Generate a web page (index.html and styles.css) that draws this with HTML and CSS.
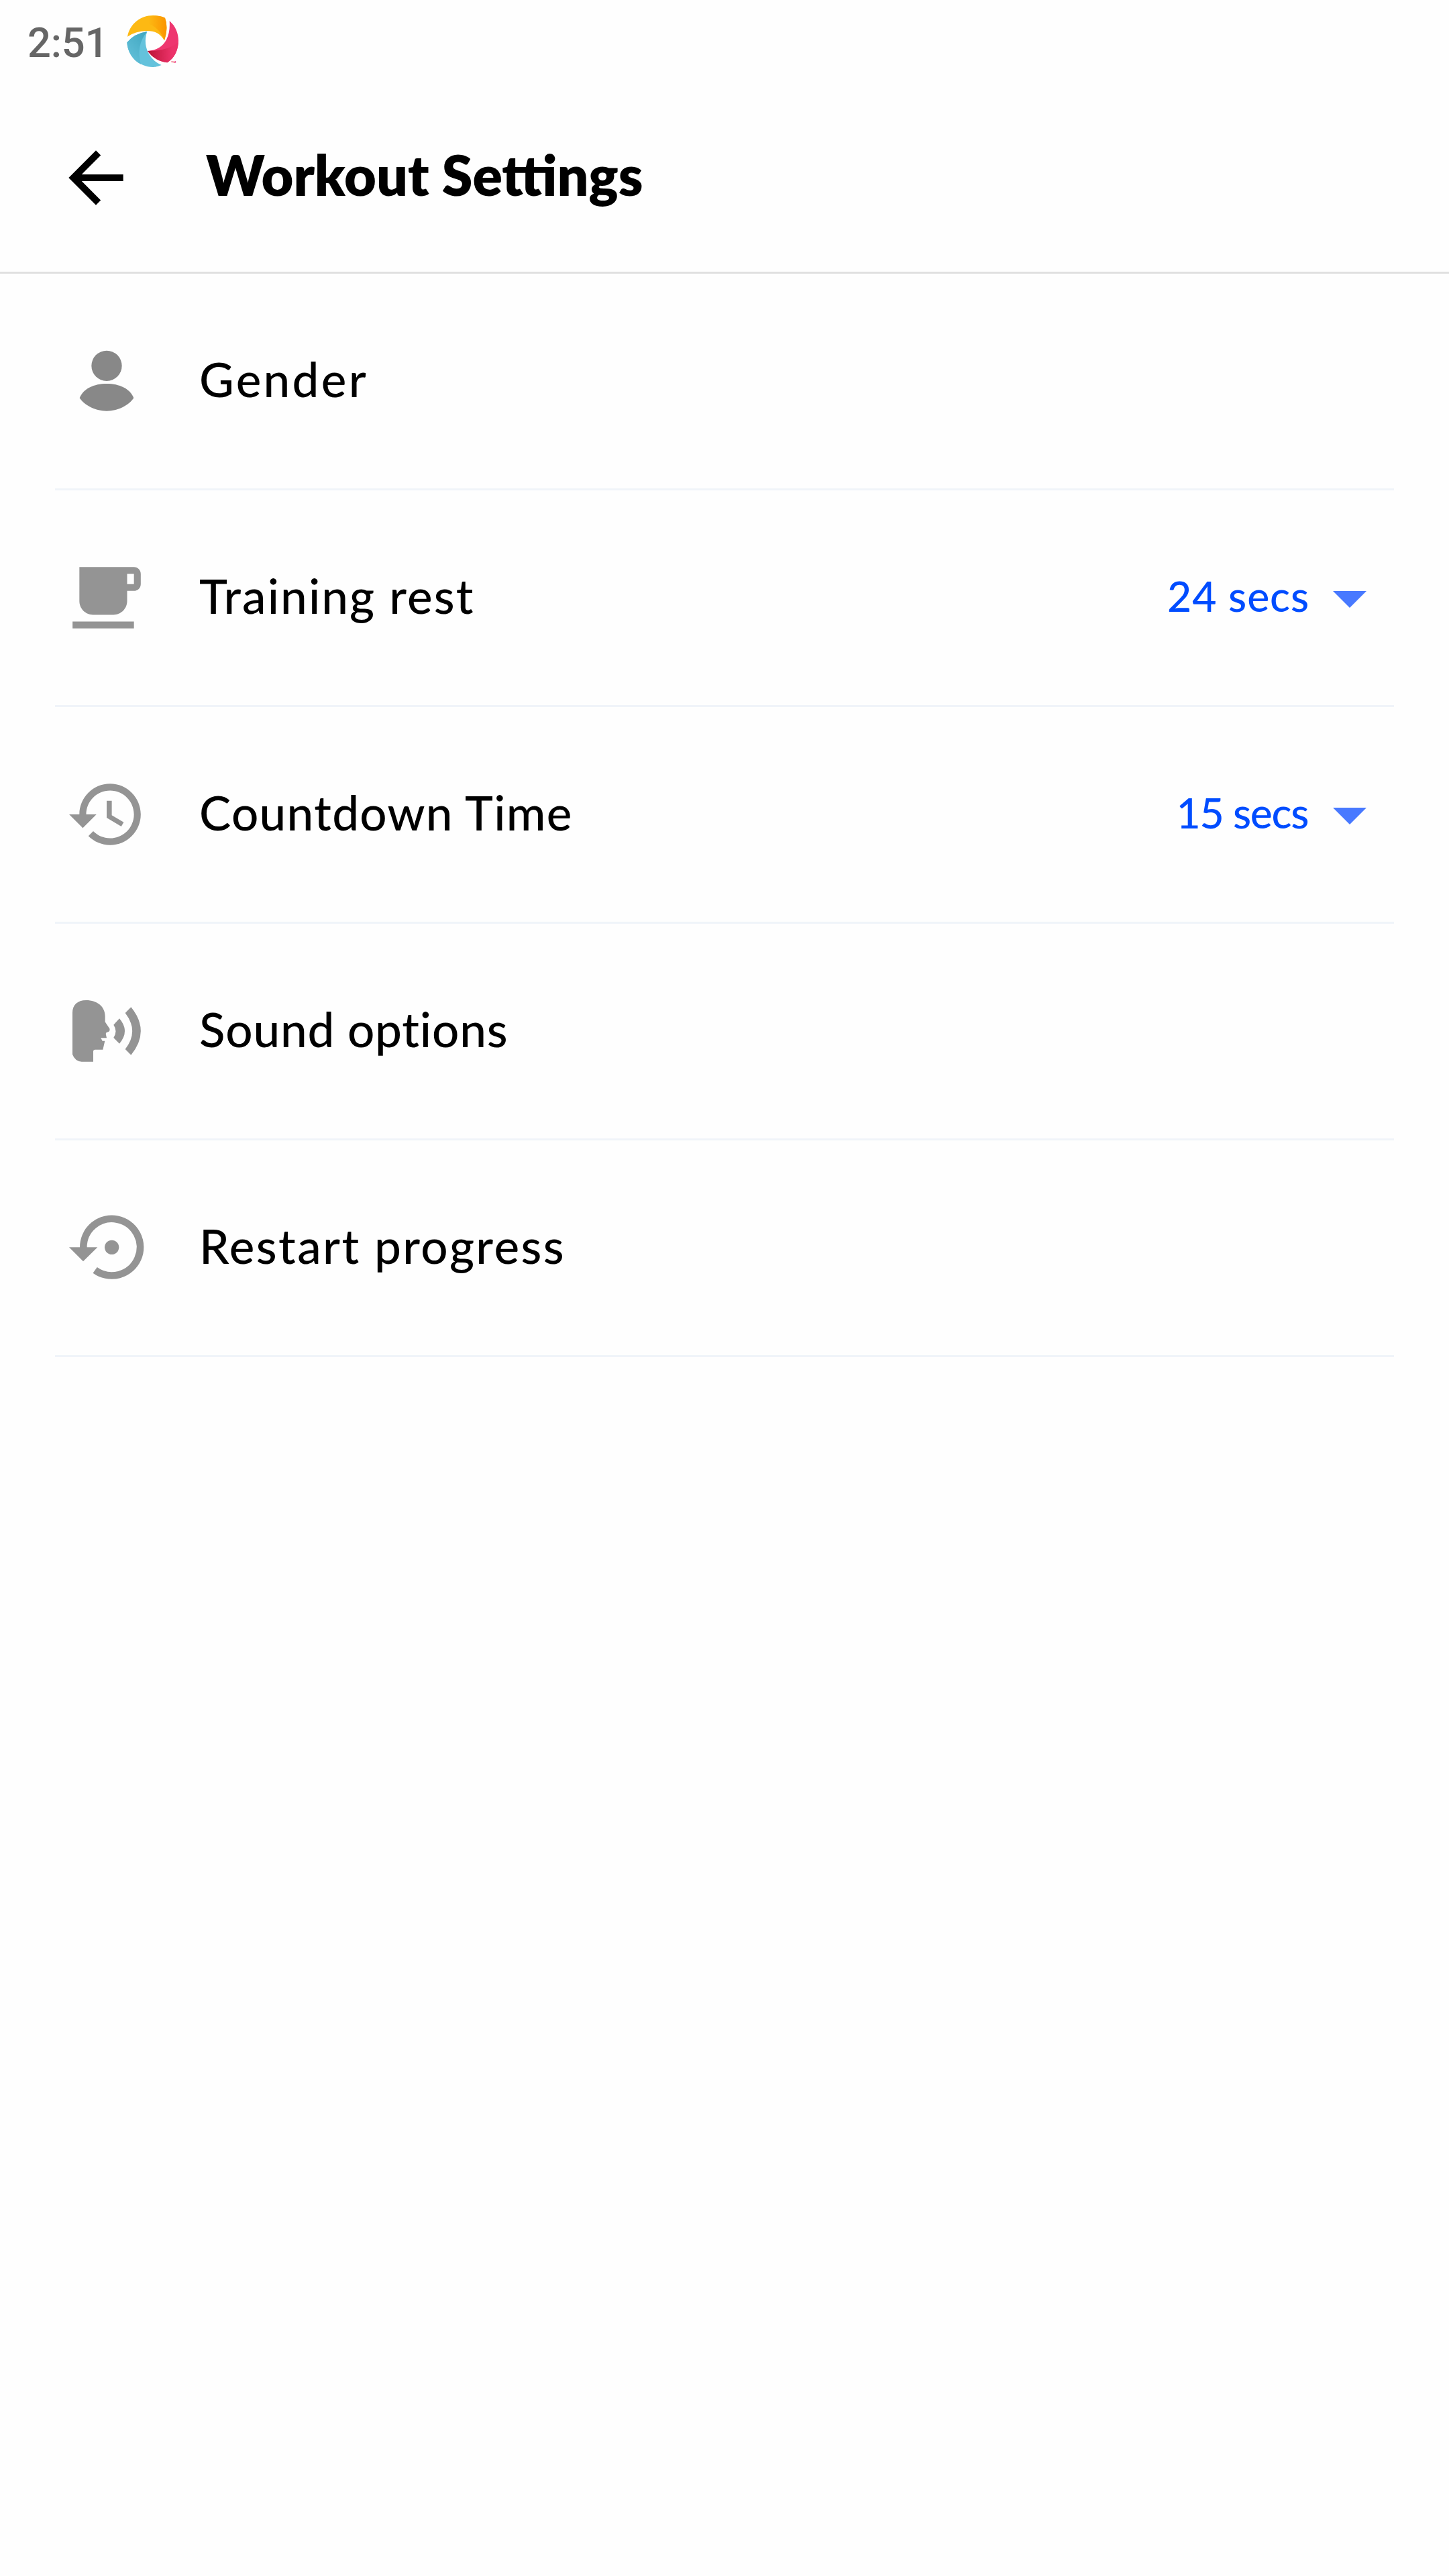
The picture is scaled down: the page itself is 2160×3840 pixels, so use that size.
FILE: index.html
```html
<!DOCTYPE html>
<html lang="en">
<head>
  <meta charset="utf-8">
  <title>Workout Settings</title>
  <link rel="stylesheet" href="styles.css">
</head>
<body>
  <div class="status-bar">
    <span class="clock">2:51</span>
    <svg class="app-badge" viewBox="567 69 231 231" aria-hidden="true">
      <defs>
        <linearGradient id="amber" x1="0" x2="1"><stop offset="0.35" stop-color="#fdb913"/><stop offset="1" stop-color="#fb9300"/></linearGradient>
        <linearGradient id="crimson" x1="0" x2="1"><stop offset="0" stop-color="#bb1236"/><stop offset="0.8" stop-color="#ec336a"/></linearGradient>
        <linearGradient id="teal" x1="1" x2="0.3" y1="0" y2="1"><stop offset="0" stop-color="#3fa5bf"/><stop offset="1" stop-color="#62c0d9"/></linearGradient>
      </defs>
      <path fill="#fdb913" d="M570 164C580 107 628 69 684 69Q713 69 738 80Q754 122 735 181C716 150 695 138 655 138Q604 140 570 164Z"/>
      <path fill="url(#amber)" d="M622 94C640 76 700 60 738 80Q754 122 735 181Q710 109 622 94Z"/>
      <path fill="#ee366f" d="M758 94C783 113 798 147 798 182C798 224 780 260 748 280Q691 272 660 228Q720 224 744 178Q762 142 758 94Z"/>
      <path fill="url(#crimson)" d="M660 228Q746 230 797 190C795 230 778 261 748 280Q691 272 660 228Z"/>
      <path fill="#64c2dc" d="M568 190Q600 150 658 141C645 180 650 213 667 243Q687 276 722 291C704 298 695 300 683 300C623 300 571 252 568 190Z"/>
      <path fill="url(#teal)" d="M568 190Q600 150 658 141Q607 203 630 287C594 271 570 230 568 190Z"/>
      <text class="badge-mark" x="766" y="282" textLength="21">TM</text>
    </svg>
  </div>

  <header class="toolbar">
    <svg class="back" viewBox="0 0 24 24"><path d="M20 11H7.83l5.59-5.59L12 4l-8 8 8 8 1.41-1.41L7.83 13H20v-2z"/></svg>
    <h1 class="title">Workout Settings</h1>
  </header>

  <main class="list">
    <div class="row">
      <svg class="icon icon-dark" viewBox="54 51 366 366">
        <circle cx="237" cy="166" r="68"/>
        <path d="M116 310C132 268 180 246 237 246S342 268 358 310C336 344 285 368 237 368S138 344 116 310Z"/>
      </svg>
      <span class="label label-gender">Gender</span>
    </div>
    <div class="row">
      <svg class="icon" viewBox="0 0 24 24"><path d="M20 3H4v10c0 2.21 1.79 4 4 4h6c2.21 0 4-1.79 4-4v-3h2c1.11 0 2-.89 2-2V5c0-1.11-.89-2-2-2zm0 5h-2V5h2v3zM2 21h18v-2H2v2z"/></svg>
      <span class="label label-rest">Training rest</span>
      <span class="value value-rest">24 secs</span>
      <svg class="caret" viewBox="0 0 50 25"><path d="M0 0h50L25 25z"/></svg>
    </div>
    <div class="row">
      <svg class="icon" viewBox="0 0 24 24"><path d="M13 3c-4.97 0-9 4.03-9 9H1l3.89 3.89.07.14L9 12H6c0-3.87 3.13-7 7-7s7 3.13 7 7-3.13 7-7 7c-1.93 0-3.68-.79-4.94-2.06l-1.42 1.42C8.27 19.99 10.51 21 13 21c4.97 0 9-4.03 9-9s-4.03-9-9-9zm-1 5v5l4.28 2.54.72-1.21-3.5-2.08V8H12z"/></svg>
      <span class="label label-countdown">Countdown Time</span>
      <span class="value value-countdown">15 secs</span>
      <svg class="caret" viewBox="0 0 50 25"><path d="M0 0h50L25 25z"/></svg>
    </div>
    <div class="row">
      <svg class="icon" viewBox="54 48 366 366">
        <path d="M84 150C84 115 106 93 145 93C195 93 230 122 230 165V190L250 220Q254 234 236 237L233 243L237 262H211L218 275H229L220 314H184Q177 315 177 322V368H125Q95 365 84 335Z"/>
        <path d="M294 175Q342 231 294 287L268 261Q287 231 268 203Z"/>
        <path d="M346 124Q433 231 346 338L320 312Q383 231 320 150Z"/>
      </svg>
      <span class="label label-sound">Sound options</span>
    </div>
    <div class="row">
      <svg class="icon" viewBox="54 27 366 366">
        <path class="ring" d="M133 210A127 127 0 1 1 185 310"/>
        <path d="M69 208H196L132 271Z"/>
        <circle cx="260" cy="208" r="32"/>
      </svg>
      <span class="label label-restart">Restart progress</span>
    </div>
  </main>
</body>
</html>
```
FILE: styles.css
```css
* { box-sizing: border-box; }

body {
  margin: 0;
  min-height: 3840px;
  background: #fefefe;
  color: #000;
  font-family: Lato, "Open Sans", sans-serif;
}

svg { display: block; flex: none; }

.status-bar {
  display: flex;
  align-items: center;
  height: 126px;
  padding-left: 41px;
}

.clock {
  width: 148px;
  padding-top: 2px;
  color: #666;
  font: 500 61.5px Roboto, sans-serif;
  letter-spacing: -0.2px;
}

.app-badge { width: 77px; height: 77px; margin-bottom: 3px; }

.badge-mark {
  fill: #ee366f;
  font: 700 13px Roboto, sans-serif;
}

.toolbar {
  display: flex;
  align-items: center;
  gap: 103px;
  height: 282px;
  padding-left: 82px;
  border-bottom: 3px solid #e0e0e0;
}

.back { width: 122px; height: 122px; margin-bottom: 2px; }

.title {
  margin: 0;
  padding-bottom: 11px;
  font-size: 82.5px;
  font-weight: 800;
}

.list { margin: 0 82px; }

.row {
  display: flex;
  align-items: center;
  height: 323px;
  padding: 0 41px 0 16px;
  border-bottom: 3px solid #f0f4f9;
}

.icon {
  width: 122px;
  height: 122px;
  margin-right: 77px;
  fill: #949494;
}

.icon-dark { fill: #888; }

.ring {
  fill: none;
  stroke: #949494;
  stroke-width: 32;
}

.label {
  flex: 1;
  padding-bottom: 7px;
  font-size: 71px;
  font-weight: 500;
  white-space: nowrap;
}

.label-gender { letter-spacing: 3.3px; }
.label-rest { letter-spacing: 2.1px; }
.label-countdown { letter-spacing: 1.3px; }
.label-sound { letter-spacing: 0.8px; }
.label-restart { letter-spacing: 2.4px; }

.value {
  margin-right: 35px;
  padding-bottom: 7px;
  color: #004cff;
  font-size: 62.5px;
  font-weight: 500;
  white-space: nowrap;
}

.value-rest { letter-spacing: 0.9px; }
.value-countdown { margin-right: 37px; letter-spacing: -1.3px; }

.caret { width: 50px; height: 25px; margin-top: 5px; fill: #4879ff; }
```
